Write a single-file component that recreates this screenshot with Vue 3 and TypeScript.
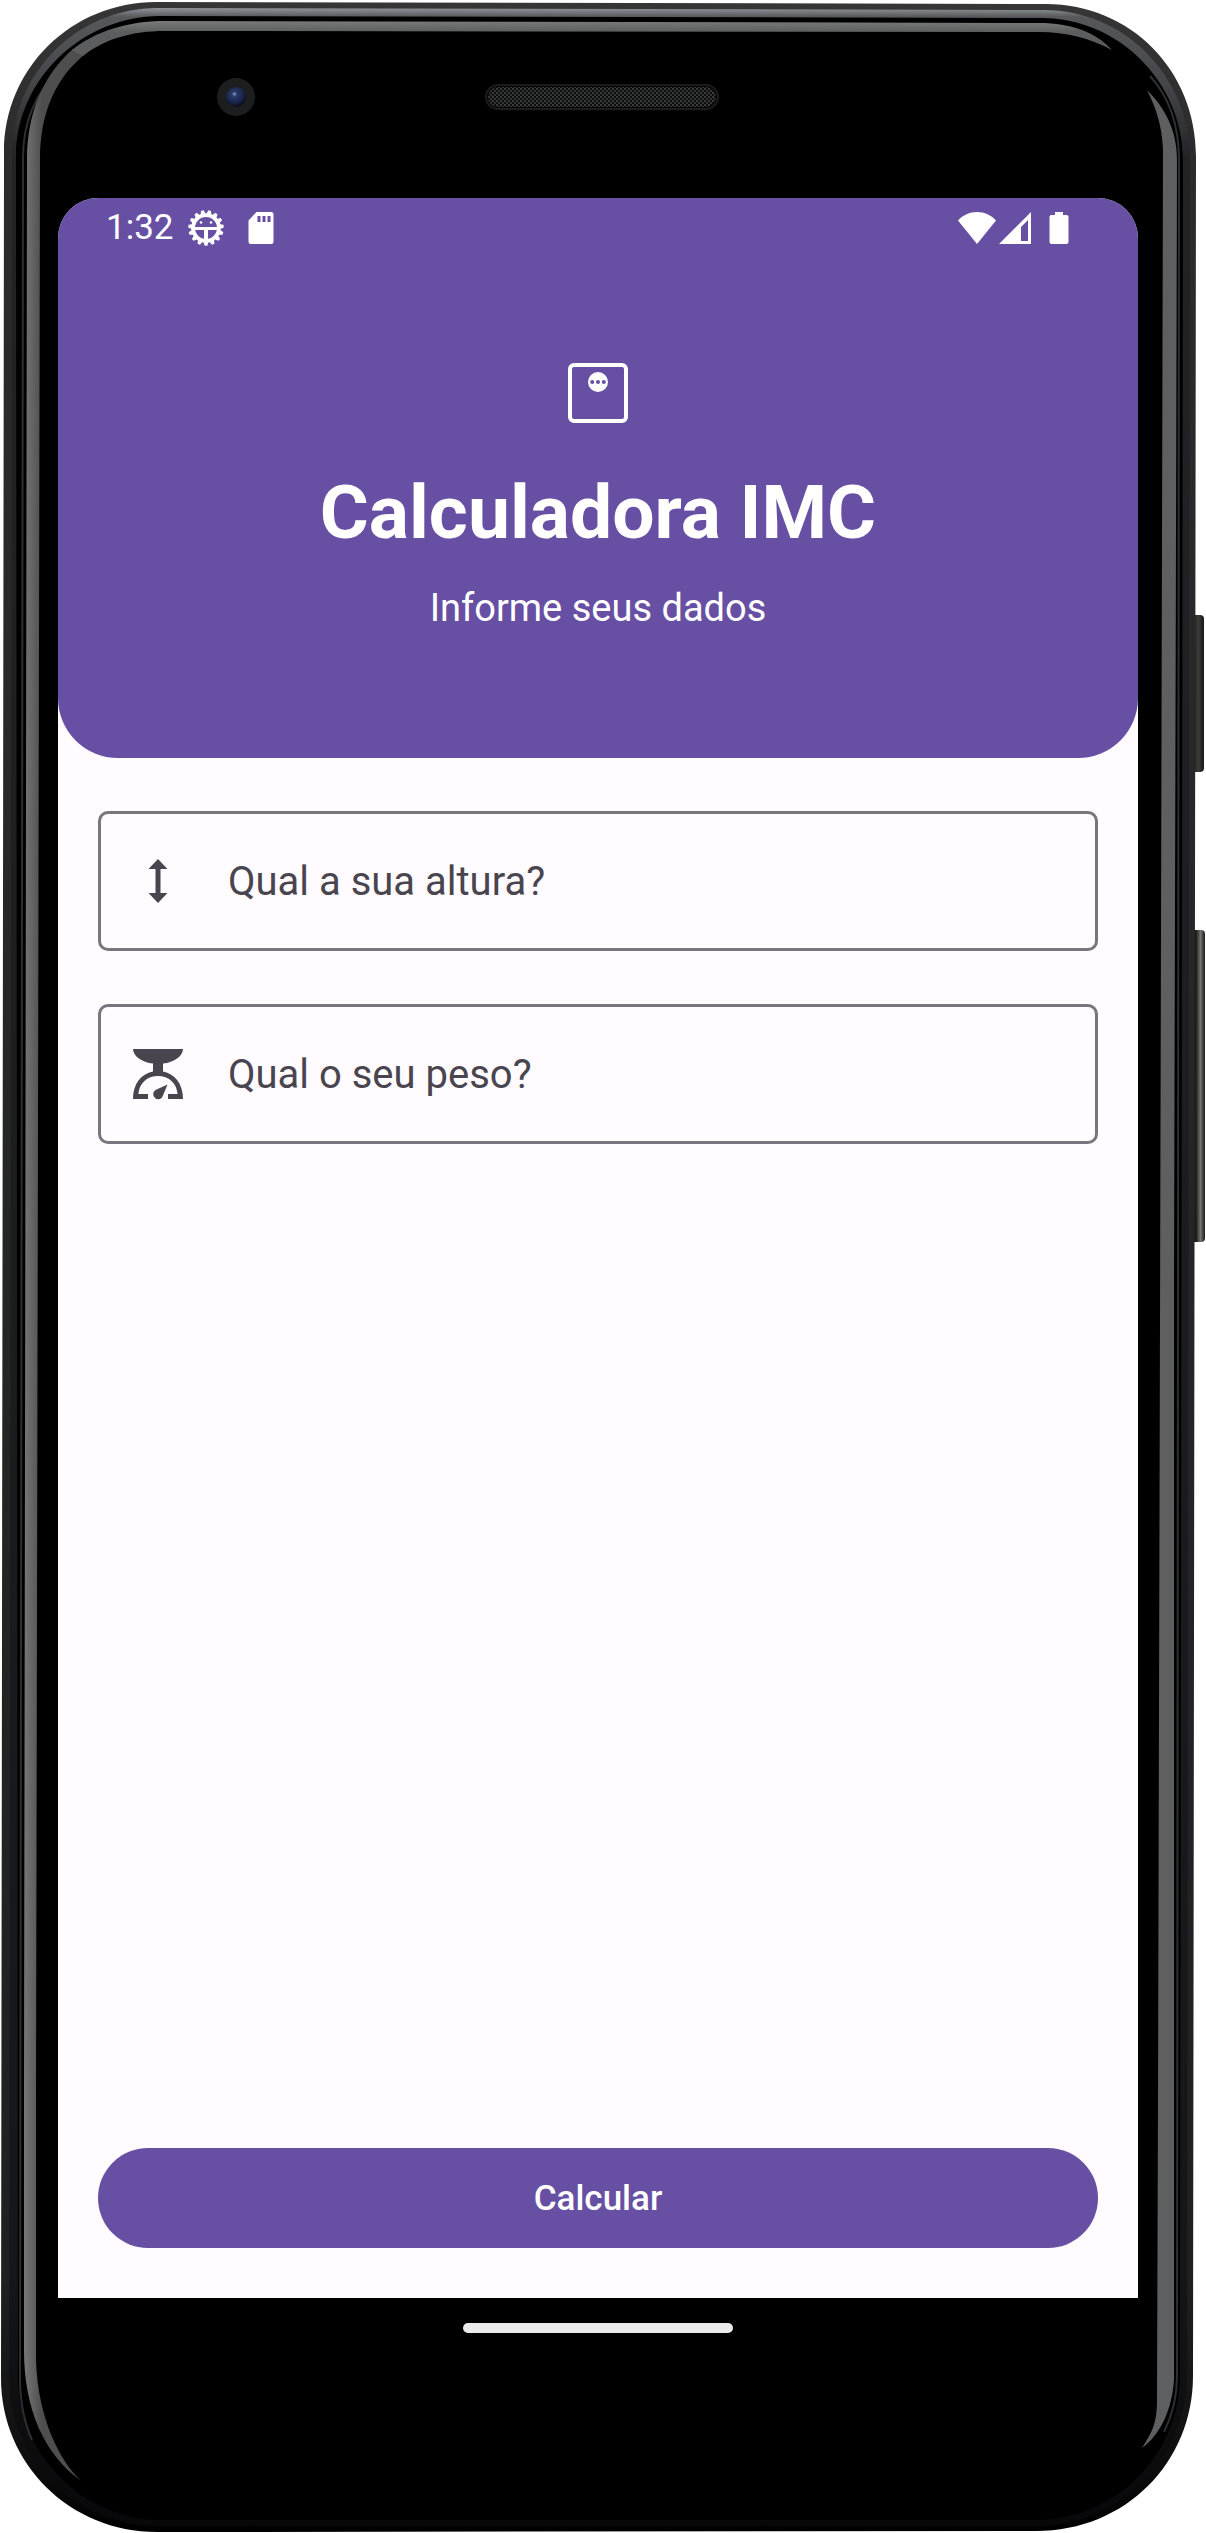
<script setup lang="ts">
import { ref } from 'vue'

const height = ref('')
const weight = ref('')

const TEETH = 15

/** Outline of the debug gear: trapezoid teeth around a ring, one pointing straight down. */
function gearOutline(cx: number, cy: number, root: number, tip: number): string {
  const step = (Math.PI * 2) / TEETH
  const points: string[] = []
  for (let i = 0; i < TEETH; i++) {
    const mid = Math.PI / 2 + i * step
    const corners: [number, number][] = [
      [mid - step * 0.38, root],
      [mid - step * 0.18, tip],
      [mid + step * 0.18, tip],
      [mid + step * 0.38, root],
    ]
    for (const [angle, r] of corners) {
      points.push(`${(cx + r * Math.cos(angle)).toFixed(2)},${(cy + r * Math.sin(angle)).toFixed(2)}`)
    }
  }
  return `M${points.join('L')}Z`
}

const gearPath =
  gearOutline(18, 18, 14.8, 17.8) + 'M18,7a11,11 0 1 0 0,22a11,11 0 1 0 0,-22Z'
</script>

<template>
  <div class="phone">
    <svg class="frame" viewBox="0 0 1206 2533" preserveAspectRatio="none" aria-hidden="true">
      <defs>
        <linearGradient id="shell" gradientUnits="userSpaceOnUse" x1="0" y1="0" x2="0" y2="2533">
          <stop offset="0" stop-color="#363636" />
          <stop offset="0.06" stop-color="#2b2b2b" />
          <stop offset="0.9" stop-color="#1f2020" />
          <stop offset="0.96" stop-color="#121212" />
          <stop offset="1" stop-color="#000" />
        </linearGradient>
        <linearGradient id="bevel" gradientUnits="userSpaceOnUse" x1="0" y1="8" x2="0" y2="2526">
          <stop offset="0" stop-color="#909499" />
          <stop offset="0.0035" stop-color="#56585b" />
          <stop offset="0.03" stop-color="#45464a" />
          <stop offset="0.06" stop-color="#222325" />
          <stop offset="0.9" stop-color="#15161a" />
          <stop offset="1" stop-color="#08080a" />
        </linearGradient>
        <linearGradient id="glint-left" gradientUnits="userSpaceOnUse" x1="22" y1="0" x2="42" y2="0">
          <stop offset="0" stop-color="#7b7b7b" />
          <stop offset="1" stop-color="#4e4e4f" />
        </linearGradient>
        <linearGradient id="glint-top" gradientUnits="userSpaceOnUse" x1="0" y1="21" x2="0" y2="32">
          <stop offset="0" stop-color="#7a7a7a" />
          <stop offset="1" stop-color="#5c5d5e" />
        </linearGradient>
        <linearGradient id="key" x1="0" y1="0" x2="1" y2="0">
          <stop offset="0" stop-color="#0c0c0c" />
          <stop offset="0.6" stop-color="#3c3c3b" />
          <stop offset="1" stop-color="#161616" />
        </linearGradient>
        <linearGradient id="key-long" x1="0" y1="0" x2="1" y2="0">
          <stop offset="0" stop-color="#0c0c0c" />
          <stop offset="0.4" stop-color="#1c1c1c" />
          <stop offset="0.7" stop-color="#75746f" />
          <stop offset="1" stop-color="#1a1a1a" />
        </linearGradient>
        <radialGradient id="lens" cx="0.42" cy="0.35" r="0.65">
          <stop offset="0" stop-color="#8f9cc4" />
          <stop offset="0.2" stop-color="#2a3967" />
          <stop offset="0.7" stop-color="#182349" />
          <stop offset="1" stop-color="#0a0d18" />
        </radialGradient>
        <pattern id="mesh" width="4" height="4" patternUnits="userSpaceOnUse">
          <rect width="4" height="4" fill="#0e0e0e" />
          <rect width="2" height="2" fill="#3a3c3c" />
          <rect x="2" y="2" width="2" height="2" fill="#343636" />
        </pattern>
      </defs>

      <rect x="1190" y="615" width="14" height="157" rx="4" fill="url(#key)" />
      <rect x="1190" y="930" width="15" height="312" rx="4" fill="url(#key-long)" />

      <path
        fill="url(#shell)"
        d="M4,152C4,68 72,2 156,2L1046,4C1130,4 1196,70 1196,156L1193,2376C1193,2462 1126,2531 1036,2531L157,2532C70,2532 1,2464 1,2378Z"
      />
      <path
        fill="url(#bevel)"
        d="M12,154C12,74 76,8 158,8L1044,10C1124,10 1190,76 1190,158L1187,2376C1187,2458 1120,2526 1036,2526L158,2526C76,2526 9,2460 9,2378Z"
      />
      <path
        fill="#000"
        d="M16,156C16,80 82,16 160,16L1042,18C1118,18 1183,82 1183,160L1180,2376C1180,2454 1116,2520 1036,2520L160,2520C84,2520 18,2454 18,2378Z"
      />
      <path
        fill="none"
        stroke="#2e2f30"
        stroke-width="2"
        d="M60,70C36,92 23,122 23,158L20,2378C20,2400 24,2422 32,2440M1150,76C1170,98 1179,126 1179,160L1177,2376C1177,2396 1172,2416 1164,2432"
      />
      <path
        fill="url(#glint-left)"
        d="M80,2480C45,2455 24,2410 24,2350L24,2100L27,160C27,112 44,74 73,49L84,55C56,78 40,112 40,160L36,2100V2360C38,2420 60,2460 80,2480Z"
      />
      <path
        fill="url(#glint-top)"
        d="M72,50C96,31 128,21 165,21L1040,23C1070,23 1096,32 1112,50C1090,38 1065,32 1040,32L165,31C132,31 104,39 83,56Z"
      />
      <path
        fill="#5d5f61"
        d="M1147,90C1165,108 1177,130 1177,160L1174,1280V2380C1172,2410 1160,2435 1142,2448C1154,2430 1157,2420 1157,2400L1158,2100L1163,150C1162,125 1156,108 1147,90Z"
      />

      <circle cx="236" cy="97" r="19" fill="#1d1e1f" />
      <circle cx="236" cy="97" r="10" fill="url(#lens)" />
      <rect x="486" y="85" width="232" height="24" rx="12" fill="#060606" stroke="#1c1c1c" stroke-width="2" />
      <rect x="488" y="87" width="228" height="20" rx="10" fill="url(#mesh)" />
    </svg>

    <div class="screen">
      <header class="hero">
        <div class="status">
          <span class="clock">1:32</span>
          <svg class="gear" viewBox="0 0 36 36" width="36" height="36" fill="#fff" aria-hidden="true">
            <path :d="gearPath" fill-rule="evenodd" />
            <rect x="5" y="17" width="26" height="3" />
            <rect x="16" y="18" width="4" height="13" />
            <circle cx="13" cy="12.5" r="1.3" />
            <circle cx="23" cy="12.5" r="1.3" />
          </svg>
          <svg viewBox="0 0 26 32" width="26" height="32" fill="#fff" aria-hidden="true">
            <path
              fill-rule="evenodd"
              d="M8.5,0H23a2.5,2.5 0 0 1 2.5,2.5V29.5a2.5,2.5 0 0 1 -2.5,2.5H3a2.5,2.5 0 0 1 -2.5,-2.5V8.5ZM9.5,4V10H12.5V4ZM14.5,4V10H17.5V4ZM19.5,4V10H22.5V4Z"
            />
          </svg>
          <span class="spacer"></span>
          <svg viewBox="0 0 38 32" width="38" height="32" fill="#fff" aria-hidden="true">
            <path d="M19,32L0,8.5C5,3 11.5,0 19,0S33,3 38,8.5Z" />
          </svg>
          <svg class="signal" viewBox="0 0 32 32" width="32" height="32" fill="#fff" aria-hidden="true">
            <path fill-rule="evenodd" d="M32,0V32H0ZM29,8L22,15V29H29Z" />
          </svg>
          <svg class="battery" viewBox="0 0 20 32" width="20" height="32" fill="#fff" aria-hidden="true">
            <path
              d="M6,0H14V3H17.5a2,2 0 0 1 2,2V30a2,2 0 0 1 -2,2H2.5a2,2 0 0 1 -2,-2V5a2,2 0 0 1 2,-2H6Z"
            />
          </svg>
        </div>
        <svg class="logo" viewBox="0 0 60 60" width="60" height="60" aria-hidden="true">
          <rect x="2" y="2" width="56" height="56" rx="4" fill="none" stroke="#fff" stroke-width="4" />
          <circle cx="30" cy="19" r="10" fill="#fff" />
          <g fill="#674fa3">
            <circle cx="24.2" cy="19" r="2" />
            <circle cx="30" cy="19" r="2" />
            <circle cx="35.8" cy="19" r="2" />
          </g>
        </svg>
        <h1>Calculadora IMC</h1>
        <p>Informe seus dados</p>
      </header>

      <form class="form" @submit.prevent>
        <label class="field">
          <svg viewBox="0 0 60 60" width="60" height="60" fill="#49454f" aria-hidden="true">
            <path d="M30,8L39.5,18H32.5V42H39.5L30,52L20.5,42H27.5V18H20.5Z" />
          </svg>
          <input
            v-model="height"
            type="text"
            inputmode="decimal"
            aria-label="Qual a sua altura?"
            placeholder="Qual a sua altura?"
          />
        </label>
        <label class="field">
          <svg viewBox="0 0 60 60" width="60" height="60" fill="#49454f" aria-hidden="true">
            <path
              d="M5,5H55C55,12 46,18.5 35,19.5V27.5C47,30 55,40 55,55H40V50H49.6C48.5,39 41,32 30,32S11.5,39 10.4,50H20V55H5C5,40 13,30 25,27.5V19.5C14,18.5 5,12 5,5Z"
            />
            <path d="M39.5,40.5L35,51.5A5,5 0 1 1 27.5,46Z" />
          </svg>
          <input
            v-model="weight"
            type="text"
            inputmode="decimal"
            aria-label="Qual o seu peso?"
            placeholder="Qual o seu peso?"
          />
        </label>
        <button type="submit">Calcular</button>
      </form>

      <div class="nav"><span class="pill"></span></div>
    </div>
  </div>
</template>

<style>
body {
  margin: 0;
  background: #fff;
}
</style>

<style scoped>
.phone {
  position: relative;
  display: flex;
  box-sizing: border-box;
  min-height: 100vh;
  padding: 198px 68px 175px 58px;
  font-family: Roboto, 'Noto Sans', sans-serif;
}

.frame {
  position: absolute;
  inset: 0;
  width: 100%;
  height: 100%;
}

.screen {
  position: relative;
  flex: 1;
  display: flex;
  flex-direction: column;
  min-width: 0;
  border-radius: 40px 40px 0 0;
  background: #fffbff;
  overflow: hidden;
}

.hero {
  display: flex;
  flex-direction: column;
  align-items: center;
  padding-bottom: 128px;
  border-radius: 0 0 60px 60px;
  background: #674fa3;
  color: #fff;
}

.status {
  align-self: stretch;
  display: flex;
  align-items: center;
  height: 60px;
  padding: 0 69px 0 48px;
}

.clock {
  font-size: 35px;
  line-height: 40px;
}

.gear {
  margin: 0 24px 0 14px;
}

.spacer {
  flex: 1;
}

.signal {
  margin: 0 18px 0 3px;
}

.logo {
  margin-top: 105px;
}

h1 {
  margin: 45px 0 30px;
  font-size: 75px;
  font-weight: 700;
  line-height: 88px;
}

p {
  margin: 0;
  font-size: 38px;
  line-height: 44px;
}

.form {
  flex: 1;
  display: flex;
  flex-direction: column;
  gap: 53px;
  padding: 53px 40px 50px;
}

.field {
  display: flex;
  align-items: center;
  gap: 40px;
  box-sizing: border-box;
  height: 140px;
  padding: 0 40px 0 27px;
  border: 3px solid #79747e;
  border-radius: 10px;
}

input {
  flex: 1;
  min-width: 0;
  padding: 2px 0 0;
  border: 0;
  outline: 0;
  background: transparent;
  color: #1c1b1f;
  font-family: inherit;
  font-size: 40px;
  line-height: 60px;
}

input::placeholder {
  color: #49454f;
  opacity: 1;
}

button {
  height: 100px;
  margin-top: auto;
  padding: 2px 0 0;
  border: 0;
  border-radius: 50px;
  background: #674fa3;
  color: #fff;
  font-family: inherit;
  font-size: 35px;
  font-weight: 500;
  line-height: 50px;
}

.nav {
  display: flex;
  align-items: center;
  justify-content: center;
  height: 60px;
  background: #000;
}

.pill {
  width: 270px;
  height: 10px;
  border-radius: 5px;
  background: #ebebeb;
}
</style>
